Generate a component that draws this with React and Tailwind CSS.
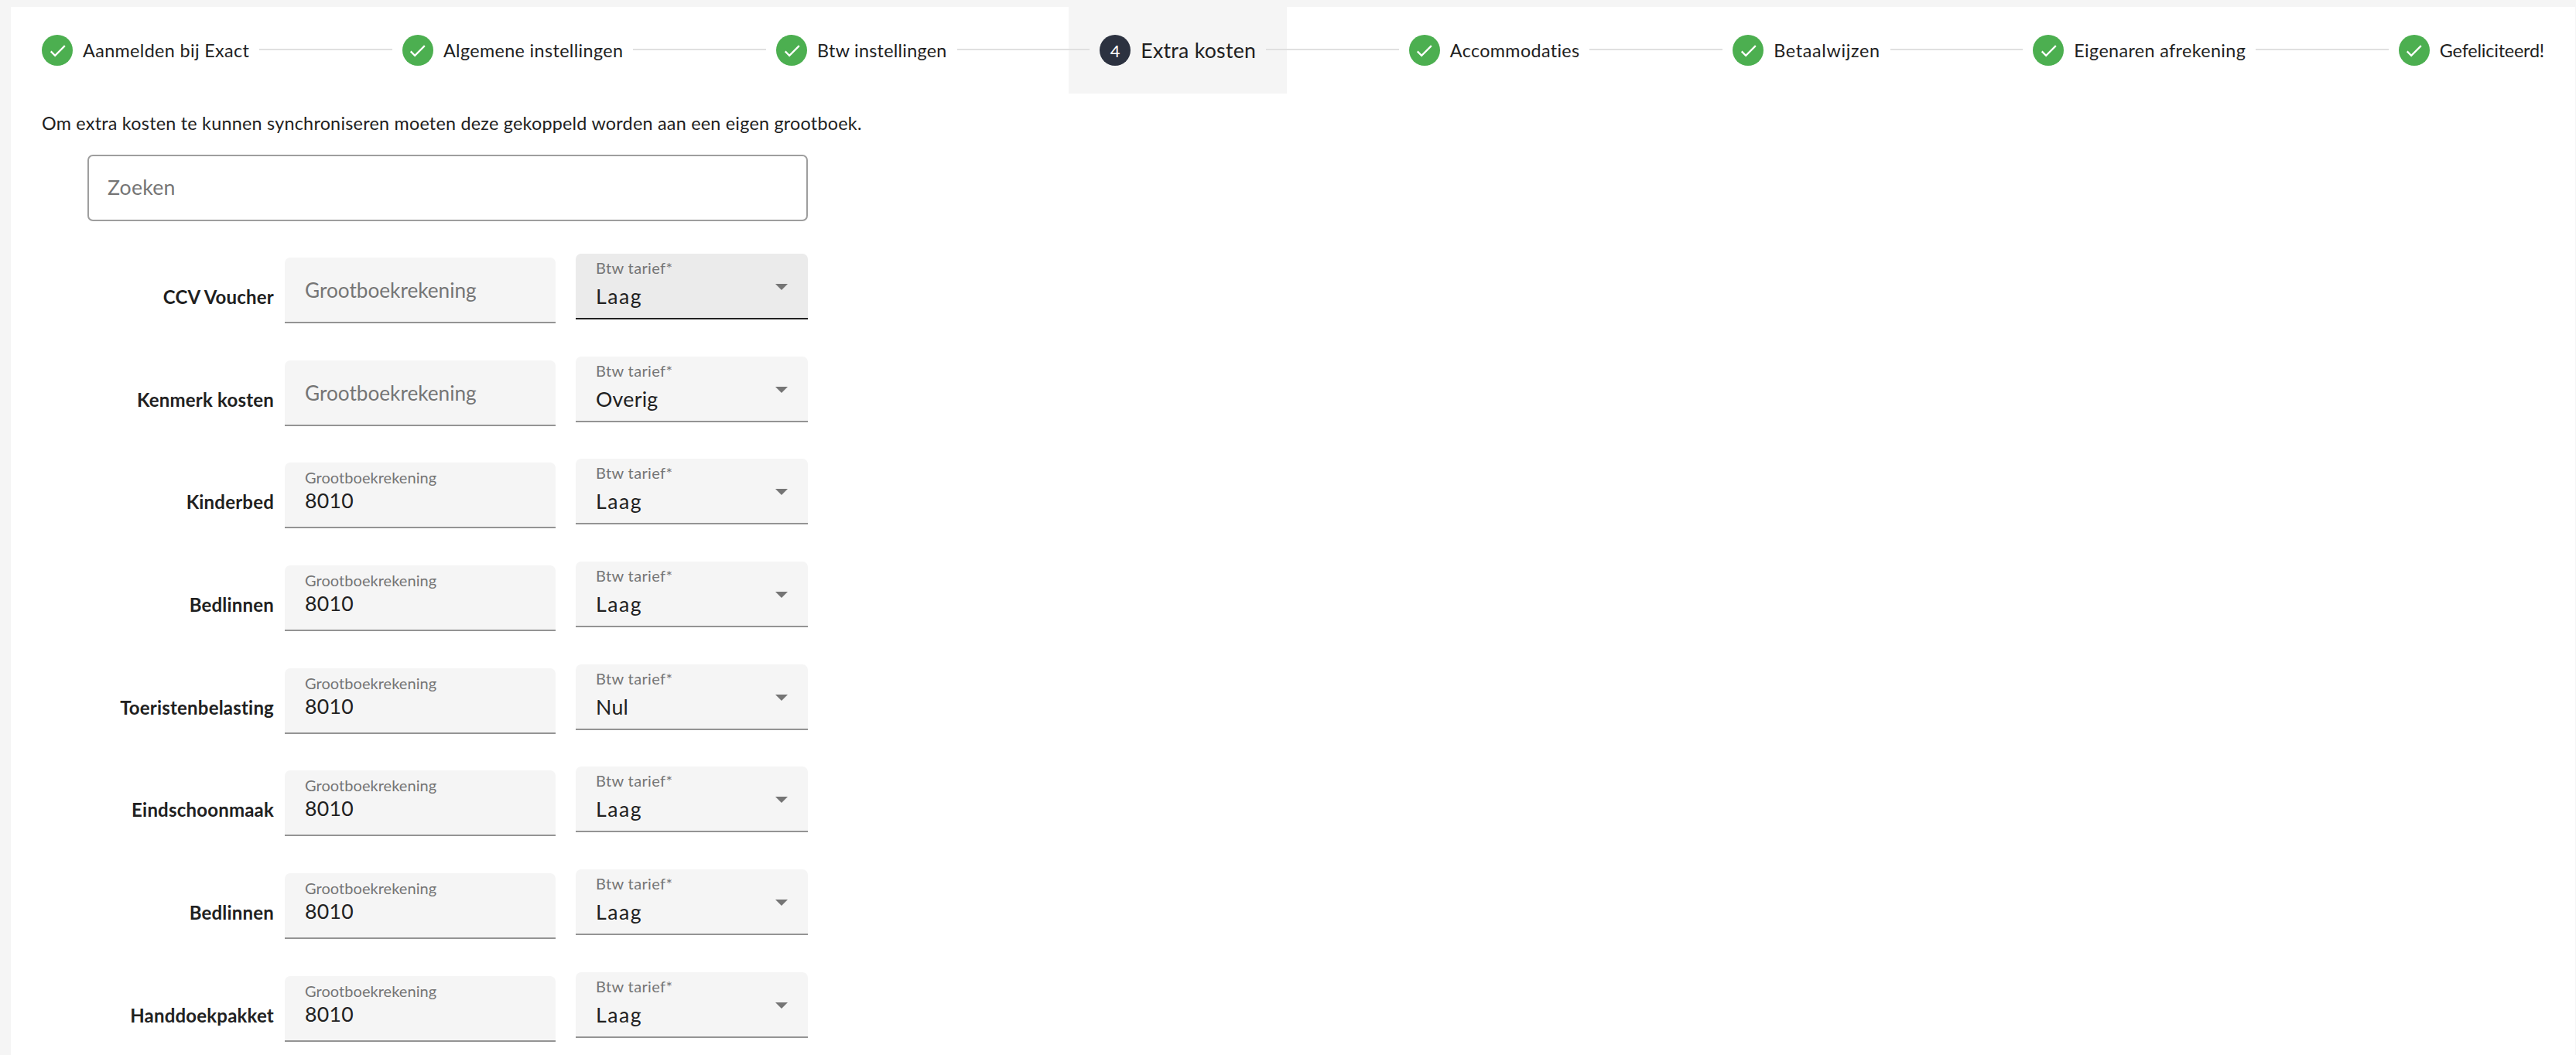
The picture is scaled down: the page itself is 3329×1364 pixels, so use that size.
import React from 'react';

const steps = [
  { label: 'Aanmelden bij Exact', done: true, spacing: 'tracking-[0.37px]' },
  { label: 'Algemene instellingen', done: true, spacing: 'tracking-[0.37px]' },
  { label: 'Btw instellingen', done: true, spacing: 'tracking-[0.27px]' },
  { label: 'Extra kosten', number: 4, active: true, spacing: 'tracking-[0.27px]' },
  { label: 'Accommodaties', done: true, spacing: 'tracking-[0.35px]' },
  { label: 'Betaalwijzen', done: true, spacing: 'tracking-[0.67px]' },
  { label: 'Eigenaren afrekening', done: true, spacing: 'tracking-[0.37px]' },
  { label: 'Gefeliciteerd!', done: true, spacing: 'tracking-[-0.16px]' },
];

const rows = [
  { name: 'CCV Voucher', ledger: '', vat: 'Laag', hover: true },
  { name: 'Kenmerk kosten', ledger: '', vat: 'Overig' },
  { name: 'Kinderbed', ledger: '8010', vat: 'Laag' },
  { name: 'Bedlinnen', ledger: '8010', vat: 'Laag' },
  { name: 'Toeristenbelasting', ledger: '8010', vat: 'Nul' },
  { name: 'Eindschoonmaak', ledger: '8010', vat: 'Laag' },
  { name: 'Bedlinnen', ledger: '8010', vat: 'Laag' },
  { name: 'Handdoekpakket', ledger: '8010', vat: 'Laag' },
];

const Step = ({ step }) => (
  <div className={`flex items-center h-[112px] px-[40px] shrink-0 ${step.active ? 'bg-[#f5f5f5]' : ''}`}>
    {step.done ? (
      <span className="w-[40px] h-[40px] rounded-full bg-[#4caf50] flex items-center justify-center mr-[13px]">
        <svg width="27" height="27" viewBox="0 0 24 24" fill="#fff">
          <path d="M21,7L9,19L3.5,13.5L4.91,12.09L9,16.17L19.59,5.59L21,7Z" />
        </svg>
      </span>
    ) : (
      <span className="w-[40px] h-[40px] rounded-full bg-[#2c3240] text-white text-[22px] flex items-center justify-center mr-[13px]">
        {step.number}
      </span>
    )}
    <span className={`whitespace-nowrap text-[#212121] ${step.spacing} ${step.active ? 'text-[26.67px]' : 'text-[23.33px]'}`}>{step.label}</span>
  </div>
);

const LedgerField = ({ value }) => (
  <div className="w-[350px] h-[85px] mt-[5px] bg-[#f5f5f5] rounded-t-[7px] border-b-2 border-[#949494] px-[26px] shrink-0">
    {value ? (
      <>
        <div className="text-[20px] leading-[24px] text-[#757575] mt-[7px] tracking-[0.05px]">Grootboekrekening</div>
        <div className="text-[26.67px] leading-[34px] text-[#212121] mt-[1px] tracking-[0.3px]">{value}</div>
      </>
    ) : (
      <div className="text-[26.2px] leading-[34px] text-[#757575] mt-[25px]">Grootboekrekening</div>
    )}
  </div>
);

const VatSelect = ({ value, hover }) => (
  <div className={`relative w-[300px] h-[85px] rounded-t-[7px] border-b-2 px-[26px] shrink-0 ${hover ? 'bg-[#ebebeb] border-[#212121]' : 'bg-[#f5f5f5] border-[#949494]'}`}>
    <div className="text-[20px] leading-[24px] text-[#757575] mt-[6px] tracking-[0.35px]">Btw tarief*</div>
    <div className={`text-[26.67px] leading-[34px] text-[#212121] mt-[8px] ${value === 'Laag' ? 'tracking-[1.5px]' : 'tracking-[0.3px]'}`}>{value}</div>
    <span className="absolute right-[26px] top-[39px] w-0 h-0 border-x-[8px] border-x-transparent border-t-[8px] border-t-[#757575]" />
  </div>
);

export default function App() {
  return (
    <div className="h-screen overflow-hidden bg-[#f5f5f5] pl-[14px] pr-[1px] pt-[9px] font-['Lato',sans-serif]">
      <div className="bg-white h-full">
        <div className="flex items-center">
          {steps.map((step, i) => (
            <React.Fragment key={step.label}>
              {i > 0 && <div className="flex-1 h-[2px] bg-[#e0e0e0] mx-[-27px] -mt-[2px] relative" />}
              <Step step={step} />
            </React.Fragment>
          ))}
        </div>
        <p className="px-[40px] mt-[23px] text-[23.33px] leading-[30px] tracking-[0.25px] text-[#212121]">
          Om extra kosten te kunnen synchroniseren moeten deze gekoppeld worden aan een eigen grootboek.
        </p>
        <div className="ml-[99px] w-[931px]">
          <div className="h-[86px] mt-[26px] border-2 border-[#9e9e9e] rounded-[7px] px-[24px] pb-[3px] flex items-center text-[26.67px] tracking-[0.2px] text-[#757575]">
            Zoeken
          </div>
          <div className="mt-[42px]">
            {rows.map((row, i) => (
              <div key={i} className="flex items-start h-[132.67px]">
                <div className="w-[241px] mr-[14px] shrink-0 text-right font-bold text-[24px] leading-[30px] tracking-[0.2px] text-[#212121] mt-[41px] whitespace-nowrap">
                  {row.name}
                </div>
                <LedgerField value={row.ledger} />
                <div className="w-[26px] shrink-0" />
                <VatSelect value={row.vat} hover={row.hover} />
              </div>
            ))}
          </div>
        </div>
      </div>
    </div>
  );
}
